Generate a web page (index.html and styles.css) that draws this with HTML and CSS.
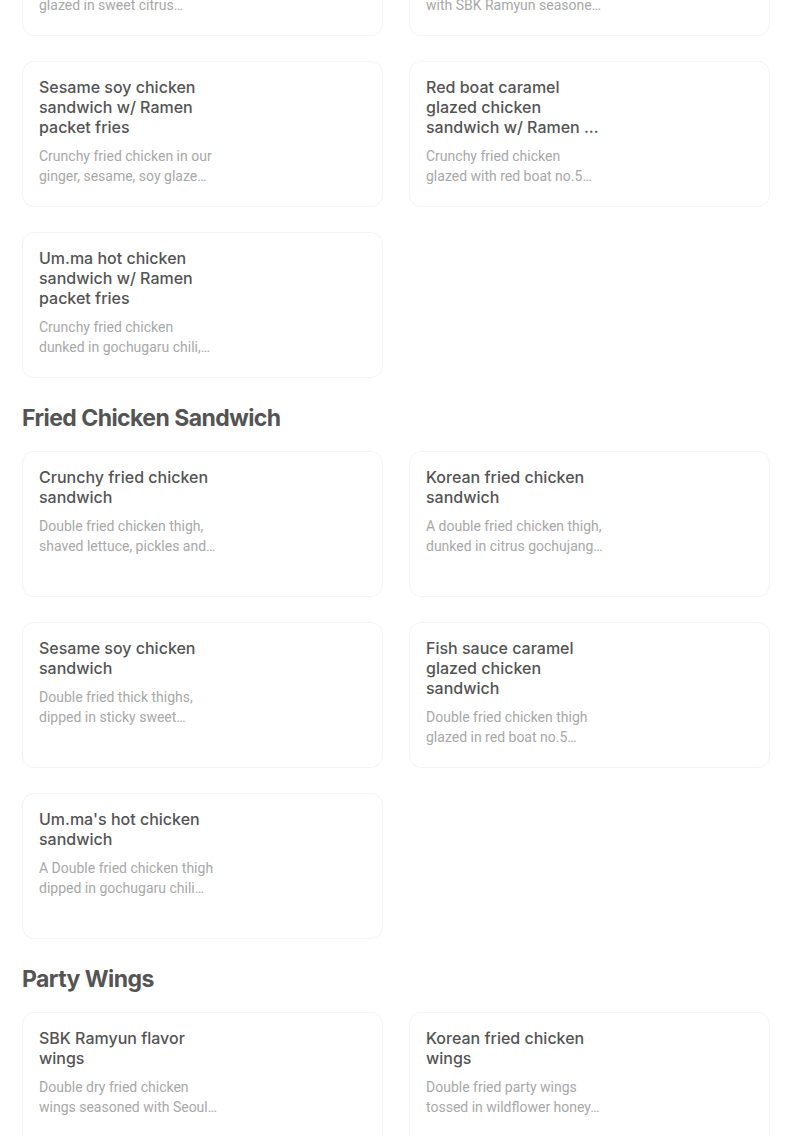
FILE: index.html
```html
<!DOCTYPE html>
<html>
<head>
<meta charset="utf-8">
<link rel="stylesheet" href="styles.css">
</head>
<body>
<div class="page">
  <div class="grid first">
    <div class="card">
      <div class="info">
        <div class="title">Korean fried chicken sandwich w/ Ramen packet fries</div>
        <div class="desc">Double fried chicken thigh<br>glazed in sweet citrus…</div>
      </div>
    </div>
    <div class="card">
      <div class="info">
        <div class="title">SBK Ramyun chicken sandwich w/ Ramen packet fries</div>
        <div class="desc">Double fried chicken thigh<br>with SBK Ramyun seasone…</div>
      </div>
    </div>
    <div class="card">
      <div class="info">
        <div class="title">Sesame soy chicken sandwich w/ Ramen packet fries</div>
        <div class="desc">Crunchy fried chicken in our<br>ginger, sesame, soy glaze…</div>
      </div>
    </div>
    <div class="card">
      <div class="info">
        <div class="title">Red boat caramel glazed chicken sandwich w/ Ramen …</div>
        <div class="desc">Crunchy fried chicken<br>glazed with red boat no.5…</div>
      </div>
    </div>
    <div class="card">
      <div class="info">
        <div class="title">Um.ma hot chicken sandwich w/ Ramen packet fries</div>
        <div class="desc">Crunchy fried chicken<br>dunked in gochugaru chili,…</div>
      </div>
    </div>
  </div>

  <h2 class="section">Fried Chicken Sandwich</h2>
  <div class="grid">
    <div class="card">
      <div class="info">
        <div class="title">Crunchy fried chicken sandwich</div>
        <div class="desc">Double fried chicken thigh,<br>shaved lettuce, pickles and…</div>
      </div>
    </div>
    <div class="card">
      <div class="info">
        <div class="title">Korean fried chicken sandwich</div>
        <div class="desc">A double fried chicken thigh,<br>dunked in citrus gochujang…</div>
      </div>
    </div>
    <div class="card">
      <div class="info">
        <div class="title">Sesame soy chicken sandwich</div>
        <div class="desc">Double fried thick thighs,<br>dipped in sticky sweet…</div>
      </div>
    </div>
    <div class="card">
      <div class="info">
        <div class="title">Fish sauce caramel glazed chicken sandwich</div>
        <div class="desc">Double fried chicken thigh<br>glazed in red boat no.5…</div>
      </div>
    </div>
    <div class="card">
      <div class="info">
        <div class="title">Um.ma's hot chicken sandwich</div>
        <div class="desc">A Double fried chicken thigh<br>dipped in gochugaru chili…</div>
      </div>
    </div>
  </div>

  <h2 class="section">Party Wings</h2>
  <div class="grid">
    <div class="card">
      <div class="info">
        <div class="title">SBK Ramyun flavor wings</div>
        <div class="desc">Double dry fried chicken<br>wings seasoned with Seoul…</div>
      </div>
    </div>
    <div class="card">
      <div class="info">
        <div class="title">Korean fried chicken wings</div>
        <div class="desc">Double fried party wings<br>tossed in wildflower honey…</div>
      </div>
    </div>
  </div>
</div>
</body>
</html>
```
FILE: styles.css
```css
* { box-sizing: border-box; }
html, body { margin: 0; padding: 0; background: #ffffff; }
body { overflow: hidden; height: 1136px; }
.page {
  padding: 0 34px 0 22px;
  font-family: Roboto, "Liberation Sans", sans-serif;
}
.grid {
  display: grid;
  grid-template-columns: 361px 361px;
  column-gap: 26px;
  row-gap: 25px;
}
.grid.first { margin-top: -110px; }
.card {
  height: 146px;
  border: 1px solid #f4f4f4;
  border-radius: 12px;
  background: #fff;
  padding: 15px 16px 0 16px;
}
.info { width: 200px; }
.title {
  width: 176px;
  font-family: Inter, Roboto, sans-serif;
  font-size: 16px;
  font-weight: 500;
  line-height: 20px;
  color: #545454;
}
.desc {
  margin-top: 9px;
  font-size: 14px;
  line-height: 20px;
  color: #a8a8a8;
  white-space: nowrap;
}
.section {
  margin: 24px 0 17px 0;
  font-family: Inter, Roboto, sans-serif;
  font-size: 23px;
  font-weight: 700;
  line-height: 32px;
  letter-spacing: -0.55px;
  color: #545454;
}
```
